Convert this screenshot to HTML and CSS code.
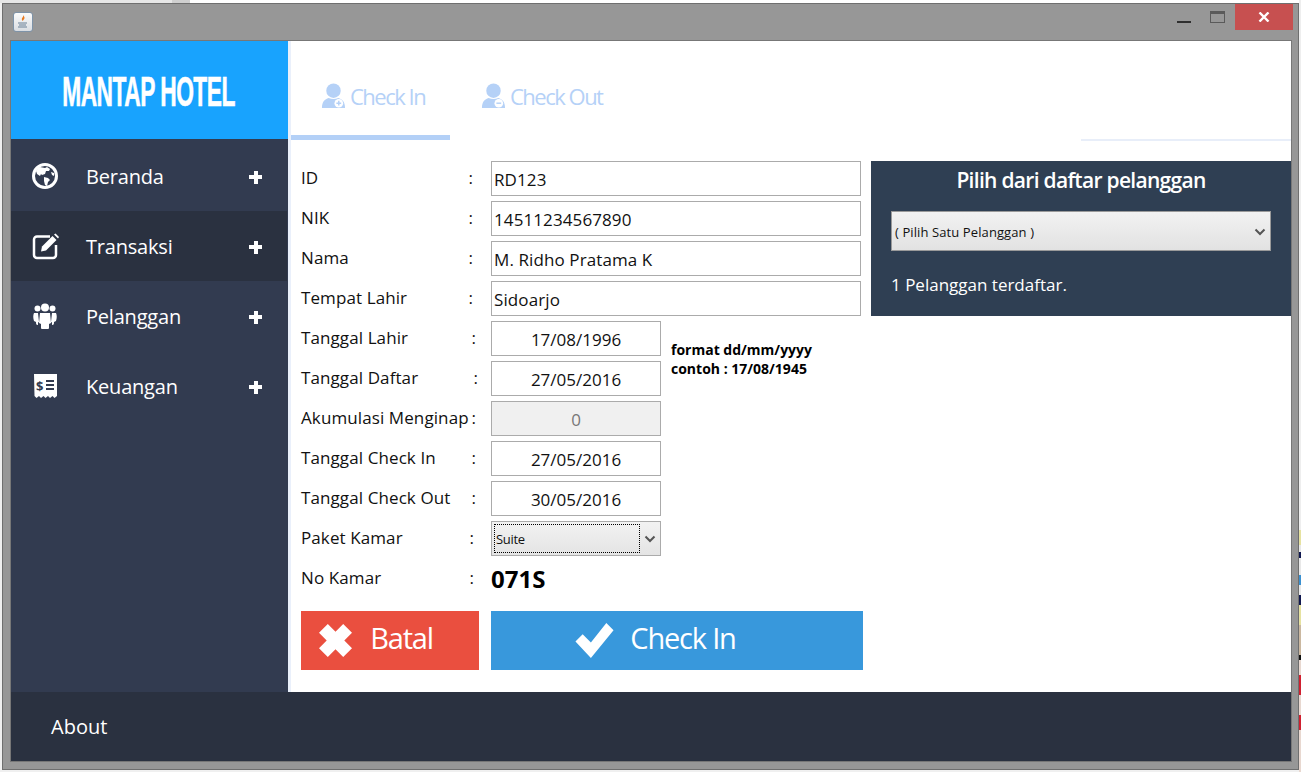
FILE: index.html
```html
<!DOCTYPE html>
<html lang="en">
<head>
  <meta charset="UTF-8">
  <meta name="viewport" content="width=device-width, initial-scale=1.0">
  <title>Mantap Hotel</title>
  <link rel="stylesheet" href="styles.css">
</head>
<body>
  <div class="window">
    <div class="titlebar">
      <div class="app-icon">
        <svg width="16" height="16" viewBox="0 0 16 16">
          <path d="M8 1c1 2-2 3-1 5 .3.6.8 1 1 1-.3-1 2-2 1.500-3.500C9.300 2.600 8.800 1.700 8 1z" fill="#e8791f"/>
          <path d="M3 9h9M4 11h7M3 13h9" stroke="#6b8197" stroke-width="1" fill="none"/>
        </svg>
      </div>
      <div class="win-buttons">
        <span class="win-min"></span>
        <span class="win-max"></span>
        <span class="win-close">
          <svg width="12" height="10" viewBox="0 0 12 10"><path d="M1.500 .5L10.500 9.500M10.500 .5L1.500 9.500" stroke="#fff" stroke-width="2.400"/></svg>
        </span>
      </div>
    </div>

    <div class="app">
      <aside class="sidebar">
        <div class="brand"><span class="brand-text">MANTAP HOTEL</span></div>
        <nav class="nav">
          <a class="nav-item">
            <svg class="nav-icon" width="28" height="28" viewBox="0 0 28 28">
              <circle cx="14" cy="14" r="11.500" fill="none" stroke="#fff" stroke-width="3"/>
              <path d="M9 5l5 1 2-1 3 2-1 2-3 0-1 3-3 1-1-1-1 2-3-2-1-3 2-3z" fill="#fff"/>
              <path d="M13 15l4 1 2 2-2 2-1 4-2-1-1-4z" fill="#fff"/>
              <path d="M20 10l3 1 0 3-2-1z" fill="#fff"/>
            </svg>
            <span class="nav-label">Beranda</span>
            <span class="nav-plus"></span>
          </a>
          <a class="nav-item active">
            <svg class="nav-icon" width="28" height="28" viewBox="0 0 28 28">
              <path d="M19 4.500H6a3 3 0 0 0-3 3V23a3 3 0 0 0 3 3h16a3 3 0 0 0 3-3V13" fill="none" stroke="#fff" stroke-width="2.500"/>
              <path d="M11 14.500L21.500 4l4 4L15 18.500l-5 1z" fill="#fff"/>
              <path d="M23 2.500l1.500-1 3.500 3.500-1 1.500z" fill="#fff"/>
            </svg>
            <span class="nav-label">Transaksi</span>
            <span class="nav-plus"></span>
          </a>
          <a class="nav-item">
            <svg class="nav-icon" width="28" height="28" viewBox="0 0 28 28">
              <circle cx="14" cy="5.500" r="4" fill="#fff"/>
              <circle cx="6.500" cy="6.500" r="3" fill="#fff"/>
              <circle cx="21.500" cy="6.500" r="3" fill="#fff"/>
              <path d="M9 11h10l1 10-2 1v4a1 1 0 0 1-1 1h-6a1 1 0 0 1-1-1v-4l-2-1z" fill="#fff"/>
              <path d="M3 11h4l1 9-1 .5V23c-2 0-2-1-2-3l-2-1c-1-3-1-6 0-8zM25 11h-4l-1 9 1 .5V23c2 0 2-1 2-3l2-1c1-3 1-6 0-8z" fill="#fff"/>
            </svg>
            <span class="nav-label">Pelanggan</span>
            <span class="nav-plus"></span>
          </a>
          <a class="nav-item">
            <svg class="nav-icon" width="28" height="28" viewBox="0 0 28 28">
              <path fill-rule="evenodd" fill="#fff" d="M3 2h23v22l-2.500 2-2-2-2.500 2-2-2-2.500 2-2-2-2.500 2-2-2-2.500 2-2-2zM15 8v2h8V8zM15 12v2h8v-2zM15 16v2h8v-2z"/>
              <text class="receipt-sign" x="5" y="19">$</text>
            </svg>
            <span class="nav-label">Keuangan</span>
            <span class="nav-plus"></span>
          </a>
        </nav>
      </aside>

      <main class="main">
        <div class="tabs">
          <div class="tab active">
            <svg width="25" height="26" viewBox="0 0 26 27">
              <circle cx="13" cy="8" r="7.500" fill="#b5d1f7"/>
              <path d="M1 26c0-7 3-9 7-10.500 3 1.500 7 1.500 10 0 4 1.500 7 3.500 7 10.500z" fill="#b5d1f7"/>
              <circle cx="18.500" cy="21" r="4.500" fill="#fff"/>
              <path d="M16 21h5M18.500 18.500v5" stroke="#b5d1f7" stroke-width="1.500"/>
            </svg>
            <span>Check In</span>
          </div>
          <div class="tab">
            <svg width="25" height="26" viewBox="0 0 26 27">
              <circle cx="13" cy="8" r="7.500" fill="#b5d1f7"/>
              <path d="M1 26c0-7 3-9 7-10.500 3 1.500 7 1.500 10 0 4 1.500 7 3.500 7 10.500z" fill="#b5d1f7"/>
              <circle cx="18.500" cy="21" r="4.500" fill="#fff"/>
              <path d="M16 21h5" stroke="#b5d1f7" stroke-width="1.500"/>
            </svg>
            <span>Check Out</span>
          </div>
          <div class="tabs-rule"></div>
        </div>

        <div class="content">
          <form class="form">
            <div class="grid">
              <label class="field-label">ID<i class="colon">:</i></label>
              <input class="input wide" readonly value="RD123">
              <label class="field-label">NIK<i class="colon">:</i></label>
              <input class="input wide" readonly value="14511234567890">
              <label class="field-label">Nama<i class="colon">:</i></label>
              <input class="input wide" readonly value="M. Ridho Pratama K">
              <label class="field-label">Tempat Lahir<i class="colon">:</i></label>
              <input class="input wide" readonly value="Sidoarjo">

              <label class="field-label">Tanggal Lahir<i class="colon far">:</i></label>
              <input class="input center" readonly value="17/08/1996">
              <div class="note">format dd/mm/yyyy<br>contoh : 17/08/1945</div>
              <label class="field-label">Tanggal Daftar<i class="colon farther">:</i></label>
              <input class="input center" readonly value="27/05/2016">

              <label class="field-label">Akumulasi Menginap<i class="colon far">:</i></label>
              <input class="input center disabled" readonly value="0">
              <label class="field-label">Tanggal Check In<i class="colon far">:</i></label>
              <input class="input center" readonly value="27/05/2016">
              <label class="field-label">Tanggal Check Out<i class="colon far">:</i></label>
              <input class="input center" readonly value="30/05/2016">

              <label class="field-label">Paket Kamar<i class="colon near">:</i></label>
              <div class="combo">
                <span class="combo-value">Suite</span>
                <svg width="12" height="8" viewBox="0 0 12 8"><path d="M1.500 1.500L6 6l4.500-4.500" fill="none" stroke="#555" stroke-width="2"/></svg>
              </div>
              <label class="field-label">No Kamar<i class="colon near">:</i></label>
              <div class="room-no">071S</div>
            </div>

            <div class="actions">
              <button type="button" class="btn btn-cancel">
                <svg width="33" height="33" viewBox="0 0 30 30"><path d="M8 0l7 7 7-7 8 8-7 7 7 7-8 8-7-7-7 7-8-8 7-7-7-7z" fill="#fff"/></svg>
                <span>Batal</span>
              </button>
              <button type="button" class="btn btn-submit">
                <svg width="41" height="35" viewBox="0 0 37 34"><path d="M0 18l7-7 8 8L30 0l7 7-22 27z" fill="#fff"/></svg>
                <span>Check In</span>
              </button>
            </div>
          </form>

          <section class="panel">
            <h2 class="panel-title">Pilih dari daftar pelanggan</h2>
            <div class="panel-combo">
              <span>( Pilih Satu Pelanggan )</span>
              <svg width="12" height="8" viewBox="0 0 12 8"><path d="M1.500 1.500L6 6l4.500-4.500" fill="none" stroke="#555" stroke-width="2"/></svg>
            </div>
            <p class="panel-count">1 Pelanggan terdaftar.</p>
          </section>
        </div>
      </main>

      <footer class="footer">About</footer>
    </div>
  </div>
</body>
</html>
```

FILE: styles.css
```css
html, body { margin:0;padding:0;height:100%;overflow:hidden }
body {
  background:
    linear-gradient(#eee 0 530px,#e6e2a0 530px 545px,#e8e8e8 545px 552px,#101850 552px 558px,#e8e8e8 558px 575px,#3a90d0 575px 585px,#e8e8e8 585px 595px,#101850 595px 605px,#e6e2a0 605px 625px,#cbb8a0 625px 655px,#111 655px 660px,#e8d8d0 660px 675px,#d02030 675px 695px,#e8d8d0 695px 715px,#d02030 715px 730px,#e8d8d0 730px) right top/2px 100% no-repeat,
    linear-gradient(90deg,#e6e6e6 0 172px,#cfcfcf 172px 190px,#fff 190px) left top/100% 3px no-repeat,
    #f0f0f0;
  font-family:"Open Sans","Noto Sans",sans-serif;
  color:#111;
}

.window { background-color:#979797;border:1px solid #6f6f6f;box-sizing:border-box;height:767px;margin:3px 2px 0;width:1297px;padding:0 6px 7px 7px;display:flex;flex-direction:column }
.titlebar { height:36px;display:flex;justify-content:space-between;align-items:flex-start;flex:none }
.app-icon { width:18px;height:18px;margin:8px 0 0 3px;border:1px solid #7e93a8;border-radius:3px;background:linear-gradient(#fbfbfb,#d9dde2);display:flex;align-items:center;justify-content:center }
.win-buttons { display:flex;align-items:flex-start }
.win-min { width:14px;height:2px;background-color:#2f2f2f;margin:17px 19px 0 0 }
.win-max { width:13px;height:8px;border:1px solid #5a5a5a;border-top-width:3px;margin:7px 10px 0 0 }
.win-close { width:58px;height:26px;background-color:#c75050;display:flex;align-items:center;justify-content:center;margin-right:-1px }

.app { flex:1;border:1px solid #777;display:grid;grid-template-columns:277px 1fr;grid-template-rows:1fr 69px;background-color:#fff;min-height:0 }

.sidebar { background-color:#323b50;display:flex;flex-direction:column }
.brand { background-color:#18a3fe;height:98px;flex:none;display:flex;align-items:center;justify-content:center;color:#fff;overflow:hidden }
.brand-text { display:inline-block;white-space:nowrap;font-family:"Liberation Sans",sans-serif;font-weight:700;font-size:43px;letter-spacing:-1px;transform:scaleX(.53);-webkit-text-stroke:.6px #fff;padding:2px 3px 0 0 }
.nav { padding-top:2px }
.nav-item { height:70px;display:flex;align-items:center;color:#fff;font-size:20px;padding-left:20px;margin-right:1px }
.nav-item.active { background-color:#2a3140 }
.nav-icon { flex:none }
.nav-label { margin-left:27px;flex:1;letter-spacing:-.2px }
.nav-plus { width:13px;height:13px;margin:2px 25px 0 0;background:linear-gradient(#fff,#fff) center/100% 4px no-repeat,linear-gradient(#fff,#fff) center/4px 100% no-repeat }
.receipt-sign { fill:#323b50;font-size:13px;font-weight:700 }

.main { border-left:3px solid #eaf0fb;display:flex;flex-direction:column;min-width:0 }
.tabs { height:99px;flex:none;display:flex;position:relative }
.tab { height:78px;border-bottom:5px solid transparent;display:flex;align-items:center;gap:4px;color:#b5d1f7;font-size:22px;letter-spacing:-1.500px;font-weight:500;padding-top:16px }
.tab.active { width:129px;padding-left:30px;border-bottom-color:#b3d0f7 }
.tab:not(.active) { margin-left:31px }
.tabs-rule { position:absolute;right:0;bottom:-1px;width:210px;height:2px;background-color:#e8eef9 }

.content { flex:1;display:flex;gap:8px;padding:21px 0 0 10px;align-items:flex-start }
.form { width:562px;flex:none }
.grid { display:grid;grid-template-columns:190px 170px 1fr;grid-auto-rows:35px;row-gap:5px }
.field-label { grid-column:1;display:flex;align-items:center;font-size:17px;letter-spacing:.1px;padding-bottom:3px;white-space:nowrap }
.colon { font-style:normal;margin-left:auto;margin-right:18px }
.colon.near { margin-right:17px }
.colon.far { margin-right:15px }
.colon.farther { margin-right:13px }

.input { box-sizing:border-box;border:1px solid #ababab;background-color:#fff;color:#111;font-family:inherit;font-size:17px;padding:2px 2px 0;height:35px;min-width:0;outline:none;width:100% }
.input.wide { grid-column:2 / 4;width:370px;letter-spacing:.1px }
.input.center { text-align:center;grid-column:2 }
.input.disabled { background-color:#f0f0f0;color:#777 }
.note { grid-column:3;grid-row:5 / 7;align-self:center;margin-left:10px;font-size:14px;font-weight:700;line-height:19px;color:#000;padding-top:1px }

.combo { grid-column:2;box-sizing:border-box;height:35px;border:1px solid #ababab;background:linear-gradient(#f2f2f2,#e4e4e4);display:flex;align-items:center;padding:2px 4px 2px 2px;justify-content:space-between }
.combo-value { flex:none;width:146px;height:100%;box-sizing:border-box;border:1px dotted #000;font-size:13px;display:flex;align-items:center;padding:1px 0 0 1px;letter-spacing:-.3px }
.room-no { grid-column:2 / 4;font-size:24px;font-weight:700;color:#000;display:flex;align-items:center;letter-spacing:0 }

.actions { display:flex;gap:12px;margin-top:15px }
.btn { border:0;height:59px;display:flex;align-items:center;justify-content:center;color:#fff;font-family:inherit;font-size:29px;letter-spacing:-1.200px;padding:0 }
.btn span { margin-top:-7px }
.btn-cancel { width:178px;background-color:#ea4f3f;gap:18px;padding-right:28px }
.btn-submit { width:372px;background-color:#3898dc;gap:15px;padding-right:44px }

.panel { flex:1;background-color:#2f3f53;color:#fff;height:155px;box-sizing:border-box;padding:6px 20px 0 }
.panel-title { margin:0;text-align:center;font-size:21px;font-weight:600;letter-spacing:-.7px;line-height:26px }
.panel-combo { margin-top:18px;height:40px;box-sizing:border-box;border:1px solid #9a9a9a;background:linear-gradient(#f2f2f2,#e2e2e2);display:flex;align-items:center;justify-content:space-between;color:#111;font-size:13px;letter-spacing:.1px;padding:2px 4px 0 3px }
.panel-count { margin:23px 0 0;font-size:17px;letter-spacing:0;line-height:22px }

.footer { grid-column:1 / 3;background-color:#2a3140;color:#fff;font-size:20px;display:flex;align-items:center;padding-left:40px;padding-bottom:1px }
```
